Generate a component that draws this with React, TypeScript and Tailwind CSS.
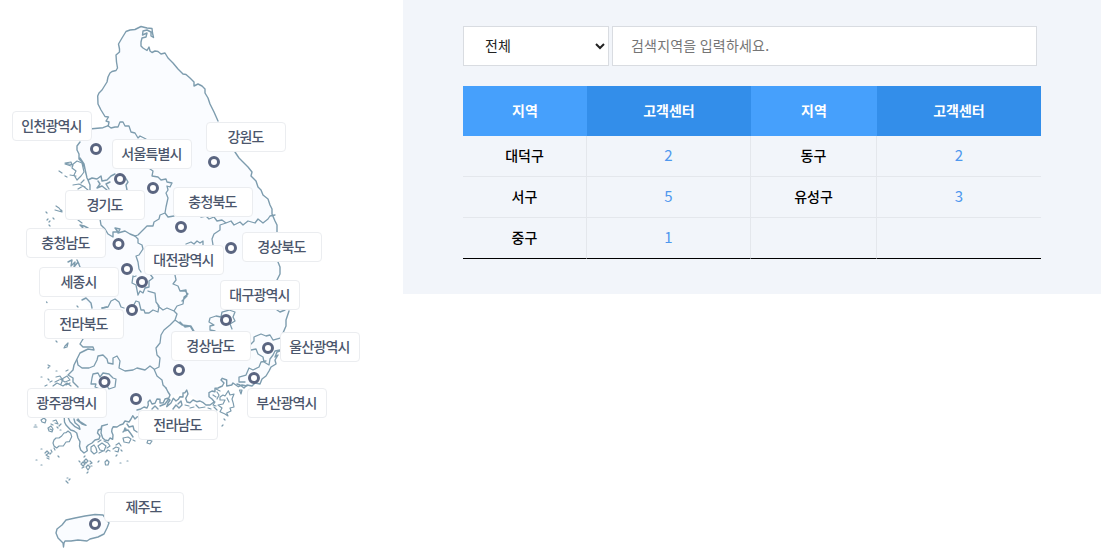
import {useState} from "react";

interface IRegion {
  name: string;
  // top left corner of the label
  label: [number, number];
  // center of the marker
  dot: [number, number];
}

const regions: IRegion[] = [
  {name: "인천광역시", label: [12, 111], dot: [96, 149]},
  {name: "서울특별시", label: [112, 139], dot: [120, 179]},
  {name: "강원도", label: [206, 122], dot: [214, 162]},
  {name: "경기도", label: [65, 190], dot: [153, 188]},
  {name: "충청북도", label: [173, 187], dot: [181, 227]},
  {name: "충청남도", label: [26, 228], dot: [118.5, 244]},
  {name: "세종시", label: [39, 267], dot: [127, 269]},
  {name: "대전광역시", label: [144, 245], dot: [142, 282]},
  {name: "경상북도", label: [242, 232], dot: [231, 248]},
  {name: "대구광역시", label: [220, 280], dot: [226, 320]},
  {name: "전라북도", label: [44, 309], dot: [132, 310]},
  {name: "경상남도", label: [171, 331], dot: [179, 370]},
  {name: "울산광역시", label: [280, 332], dot: [268, 348]},
  {name: "광주광역시", label: [27, 388], dot: [104.5, 382]},
  {name: "부산광역시", label: [247, 388], dot: [254, 378]},
  {name: "전라남도", label: [138, 410], dot: [136, 399]},
  {name: "제주도", label: [104, 492], dot: [95, 524]},
];

// fill of the mainland
const land =
  "M108 126 106 121 108 117 105 116 101 110 98 104 98 95 102 90 107 82 109 75 112 71 117 69 116 55 119 51 118 44 122 37 126 31 133 29 141 26 147 28 141 40 141 46 144 49 151 52 160 54 165 53 178 69 188 76 196 85 204 88 218 121 235 152 248 167 256 181 263 195 272 209 277 224 278 262 280 268 278 278 289 310 284 331 280 346 276 365 266 376 258 384 246 387 231 384 216 384 213 401 202 403 186 392 168 396 148 404 137 416 125 421 113 427 112 439 102 438 101 427 99 436 88 445 84 453 80 442 76 433 66 425 68 418 77 387 69 375 76 362 84 351 83 339 92 309 82 299 74 268 92 229 103 228 100 219 92 189 88 179 83 164 77 148 80 141 92 129Z";

// outer coast lines
const coast = [
  "M92 128.7 103 127.7 108.3 125.7 109 122 106 121 108.5 117 105 116.5 101 110 98 104 97.7 96 99 93 102 90 107 82 108 77 110 73 112 71.5 116 70.5 117.5 68 116.5 62 116 55 119.5 52 119.5 49 118.5 44 122 38 126 31.5 130 30 135 29.5 141 26.5 147 28 152 28.5 152.5 33 153.5 37.5 151 36 151 32 147 30 143 31 142.5 35 147 33 146 37 142 38 141 42 141 46 143 48 147 50.5 149 47 150 51 152 52.5 155 51 158 51.5 161 54 165 53 168 58 173 63 178 69 183 74 186 74.5 190 78 194 82 194 86 198 84 202 86 205 89 205 93 208 98 210 104 214 112 218 121",
  "M235 152 239 158 244 163 248 167 252 172 251 176 256 181 258 187 261 190 263 195 268 199 270 205 272 209 272 214 275 221 277 225 277 232",
  "M278 262 280 267 280 274 277 280",
  "M277 310 280 312 285 310 M289 311 286 320 286 326 283 333",
  "M282 350 277 352 275 357 278 355 275 360 276 364 271 367 269 371 266 376 262 379 260 384 255 383 252 386 247 385 244 388 240 385 237 384",
  "M80 142 77 146 77 150 79 154 79 159 82 162 85 169 87 178 88 180 90 185 90 190M80 158 84 164 86 174",
  "M88 180 92 178 97 179 101 176 102 181 107 180 111 176 115 174M125 177 128 182 126 185 127 190M98 181 100 184 97 188 102 186 107 190M110 182 106 184 109 189",
  "M100 219 101 225 105 229 108 234 113 237 113 232 118 232 115 228 120 229 118 233 125 231 130 234 135 236",
  "M88 228 84 226 80 225 83 228M68 262 72 260 71 266 75 262 74 267 78 262 80 267M77 260 79 264",
  "M82 300 86 298 88 300 91 303 92 308M102 308 107 307",
  "M83 339 80 344 83 347 93 347 94 350 88 349 80 353 77 359 74 365 73 370 68 375 73 378 73 382 78 387",
  "M64.3 418 64.5 422 66 425 70.7 430 74 431 76.7 433 78 438 80 441.7 79.5 446 80.7 450 84 453 87.3 450.7 86.5 447 88.3 445 92 443 95 440 99 439 100 436 97.5 433 98.3 430 101 429 101.7 426 107.3 424.3",
  "M101.7 427 101 433 102.7 438 105 440 108.3 440.7 110 438 112.7 439.3 113 435 111.7 431.7 112 429 113.3 426.7 117 427 120 425 123 424 125 421 129 422 131 419 132.7 415.7 135 419 137.3 416.7",
  "M68.3 418 70 421.7 75 426.7 80 429.3 79 426 75 422.7 74 419M78 419 80 421.7 86 425.3 82 424 77 420M125 428 124 431 128 430 131 434 133 437M127 424 129 427 133 426 134 430 137 432M123 432 126 429",
  "M137 410 140 409.3 144 407 147 408 148.3 405 148 402 150 400 152 404 155 403.3 157 399 160 399.3 160 403 163.3 402.7 165 399 167.7 398.3 170 400 168 403 166.7 406.7 171 403 173.3 398.3 176 401 178.3 399.3 180 396.7 183 397 183 393 185 392.7 186.7 390 188 394 185.7 398.3 187 402 190 402.7 193 400 196.7 401.7 200 401 203.3 402.7 206 405 210 405 214.3 401.7 212 399 209 396.7 209 392.7 212 391 215 391.7 215 388.3 218 388 222.3 386 224 383 221 380 222.3 378.3 226.7 380 226.7 386 231.7 385 233 383 238.3 386.7 242 385 246.7 386",
  "M166 388 168 392 170 395 168 400 165 404 160 406M152 409 155 406 158 409M173 409 176 405 179 408 182 405 181 401 178 404",
];

// borders between the provinces
const borders = [
  "M108 125.7 111 128 115 127 118 127 120 122 123 122 125 126 129 126 131 132 135 133 138 138 140 136 146 139",
  "M150 169 153 171 152 176 158 177 161 180 166 179 167 182 172 183 170 187 167 186 168 190 166 193 168 198 166 207 165 213 160 215 159 219 154 222 153 226 147 226 143 230 138 235 135 236M166 207 165 213 168 217 174 216",
  "M135 236 138 239 138 243 142 245 143 249 139 255 136 256 138 262 139 269 141 272",
  "M133 276 132 283 136 285 138 295 140 291 143 293 145 288 149 287 149 281 153 278 150 274M136 276 133 277",
  "M148 291 155 293 156 302 159 306 158 312 153 310 149 313 145 313 144 310 141 310 139 302 136 301 132 308M124 308 121 307 119 302 115 299 111 301 108 307 102 308",
  "M158 306 163 310 167 308 174 311 177 306 183 304 184 297 188 294 185 291 180 291 178 286 173 284 176 280 175 275",
  "M174 311 177 314 175 320 170 325 164 330 161 335 160 343 156 348 157 355 160 358 159 367 155 369M175 320 182 325 190 326 193 331",
  "M77 360 78 365 82 368 89 368 94 366 97 360 98 356 103 355 107 359 108 363 113 364 113 358 117 356 120 361 119 368 125 371 133 370 137 368 145 370 150 366 154 369 157 376 162 380 163 385 166 388",
  "M92 378 93 374 98 373 100 377 103 373 109 374 113 378 116 379 115 387 109 389 107 386 100 389 95 387 96 384 91 384Z",
  "M201 217 206 216 209 219 214 217 217 221 222 220 226 223 231 221 234 225 240 222 243 225 248 221 255 223 258 219 263 223 268 219 270 216 275 215M226 223 220 225 220 230 214 234 212 239 213 245",
  "M186 244 191 242 194 244 197 241 200 243 203 241 203 246M180 291 186 290 187 296 182 301",
  "M215 331 210 330 210 326 214 325 209 322 210 318 216 316 221 317 222 312 229 310 235 312 233 317 235 321 230 324 232 329M180 322 185 327 191 326 194 331",
  "M251 344 254 341 254 337 261 334 266 336 270 335 273 340 280 338M251 350 256 349 258 354 263 357 264 362 269 365 270 359 273 355 275 351 280 350M266 361 261 362 259 367 253 370 249 368 246 375 239 377 239 382 245 382",
];

// small and large islands
const islands = [
  "M65 163 71 162 72 165 77 161 82 163 84 172 81 176 77 180 74 175 76 171 72 168 73 165Z",
  "M59 171 62 173M65 176 67 177M73 185 79 184 85 187M70 175 76 176M78 189 83 186 88 190M65 164 71 166M81 183 84 180M56 206 59 208 62 212 55 210M46 212 47 213M53 218 54 219M49 225 50 226M61 210 62 211M78 220 82 223M48 219 47 220M49 222 50 221",
  "M46.5 302 47 302.5M77 306 78 307M65 346 68 343 67 347 64 348ZM56 341 57 342M48 365 50 366M48 368 49 367M56 371 57 371M41 377 42 377M56 377 60 376 62 379 67 376 70 380 65 382 60 379M50 382 52 381M66 371 68 370M45 386 47 385M53 386 57 383 63 386 67 383 71 386M59 380 55 382M63 379 61 384M70 383 66 385M48 379 49 380",
  "M34 427 37 427M35 425 36 425M41 420 44 418 46 420 45 423 42 422ZM48 428 51 426 53 429 52 432 49 431ZM53 421 56 420 58 424 55 423M61 424 59 426M51 424 53 425M50 429 52 430M60 430 61 430M57 427 58 428",
  "M53 443 54 440 56 438 59 438 61.7 436 64 433 66 432.7 68 431 70.7 433.3 71.7 436.7 69.3 441.7 66 442 63.3 446 59 446 56.7 448 54 446Z",
  "M36 460 37 460M41 449 42 449M45 453 47 451 49 453 46 455 49 457M51 450 52 452M47 458 49 459M41 465 42 465M58 456 59 457M54 448 55 450M50 454 51 453",
  "M81 464 83 462 85 464 83 466ZM86 459 88 461 86 463 84 461ZM86 467 88 465 90 467 88 470ZM90 461 92 463 90 464M79 461 80 462M87 473 88 472M84 457 85 456M82 468 84 467M91 466 92 466",
  "M105 462 107 460 109 462 108 465 105.5 465ZM120 463 121 463M127 461 128 461M116 456 117 455M98 462 99 461M66 481 68 483M67 478 68 478M69 480 70 479",
  "M91 447 94 445 96 448 97 452 94 454 91 451ZM98 446 102 443 106 446 104 451 100 450ZM104 441 108 443 110 446 107 448M99 453 103 451M98 442 101 440M106 452 108 450 110 451",
  "M123 438 128 437 131 439 129 443 124 442ZM148 440 152 441 150 444 147 443ZM113 449 116 447 119 448 118 452 115 451M116 445 119 443 121 446M133 440 135 441M121 450 122 451",
  "M220 397 223 395 225 396 228.3 390.7 230 395 234 394 232 399 233.3 403.3 234 407 230 408 231 411 226.7 413 228 416 225 414 220 411.7 222 408 218 405 223 404 225 400 220 400Z",
  "M216 389 220 391M213 395 216 397M214 407 217 410M239.5 390 242 390 241 394ZM222 426 223 425M215 402 213 405 216 406M196 405 199 408 205 407M185 405 189 406M190 408 194 407M208 408 211 409M224 419 225 420M217 392 219 395 217 399M227 398 229 402",
];

const jeju =
  "M56 533 57 529 62 525 66 520 75 518 80 517 85 516 95 514.5 103 515 109 523 107 528 104 534 98 537 90 539 87 541 78 540 71 541 65 541 64 543 63.5 547 63 543 58 538Z";

const RegionMap = () => {
  const [active, setActive] = useState("");

  return (
    <div className="relative w-[403px] h-[552px] shrink-0">
      <svg width="403" height="552" viewBox="0 0 403 552" fill="none" stroke="#7d9cae" strokeWidth="1.4" strokeLinejoin="round" strokeLinecap="round">
        <path d={land} fill="#fafcff" stroke="none" />
        <path d={coast.join("")} />
        <path d={borders.join("")} strokeWidth="1.3" />
        <path d={islands.join("")} strokeWidth="1.2" />
        <path d={jeju} fill="#fafcff" />
        {regions.map(({name, dot}) => (
          <circle key={name} cx={dot[0]} cy={dot[1]} r="4.5" fill="#fff" stroke="#5a6580" strokeWidth="3" />
        ))}
      </svg>
      {regions.map(({name, label}) => (
        <button
          key={name}
          type="button"
          aria-pressed={active === name}
          onClick={() => setActive(name)}
          className="absolute w-20 h-[30px] pb-0.5 pr-px flex items-center justify-center bg-white border border-[#ebedf0] rounded text-sm font-medium tracking-[-0.8px] whitespace-nowrap text-[#4b566c]"
          style={{left: label[0], top: label[1]}}
        >
          {name}
        </button>
      ))}
    </div>
  );
};

const rows = [
  ["대덕구", "2", "동구", "2"],
  ["서구", "5", "유성구", "3"],
  ["중구", "1", "", ""],
];

const CenterTable = () => {
  return (
    <table className="w-[578px] mt-5 table-fixed border-separate border-spacing-0 text-sm text-center">
      <colgroup>
        <col className="w-[124px]" />
        <col className="w-[164px]" />
        <col className="w-[126px]" />
        <col className="w-[164px]" />
      </colgroup>
      <thead>
        <tr className="h-[50px] text-white">
          <th className="pb-0.5 bg-[#46a0fc]">지역</th>
          <th className="pb-0.5 bg-[#338eea]">고객센터</th>
          <th className="pb-0.5 bg-[#46a0fc]">지역</th>
          <th className="pb-0.5 bg-[#338eea]">고객센터</th>
        </tr>
      </thead>
      <tbody>
        {rows.map((row) => (
          <tr key={row[0]} className="h-[41px] group">
            {row.map((cell, i) => (
              <td key={i} className="pb-0.5 border-b border-r border-[#e4e7ec] last:border-r-0 group-last:border-b-black font-medium text-black even:font-normal even:text-[15px] even:leading-5 even:text-[#4f98ee]">
                {cell}
              </td>
            ))}
          </tr>
        ))}
      </tbody>
    </table>
  );
};

const App = () => {
  const [keyword, setKeyword] = useState("");

  return (
    <div className="flex items-start w-[1115px] h-[552px] overflow-hidden bg-white font-['Noto_Sans_CJK_KR',sans-serif]">
      <RegionMap />
      <section className="w-[698px] h-[294px] pt-[26px] pl-[60px] bg-[#f2f5fa]">
        <div className="flex gap-[3px]">
          <select className="w-[146px] h-10 pl-[17px] pb-0.5 bg-white border border-[#d9dce1] text-sm text-[#222]">
            <option>전체</option>
          </select>
          <input
            type="text"
            value={keyword}
            onChange={(e) => setKeyword(e.target.value)}
            placeholder="검색지역을 입력하세요."
            className="w-[425px] h-10 pl-[18px] pb-0.5 bg-white border border-[#d9dce1] text-sm tracking-[0.2px] placeholder:text-[#757575]"
          />
        </div>
        <CenterTable />
      </section>
    </div>
  );
};
export default App;
